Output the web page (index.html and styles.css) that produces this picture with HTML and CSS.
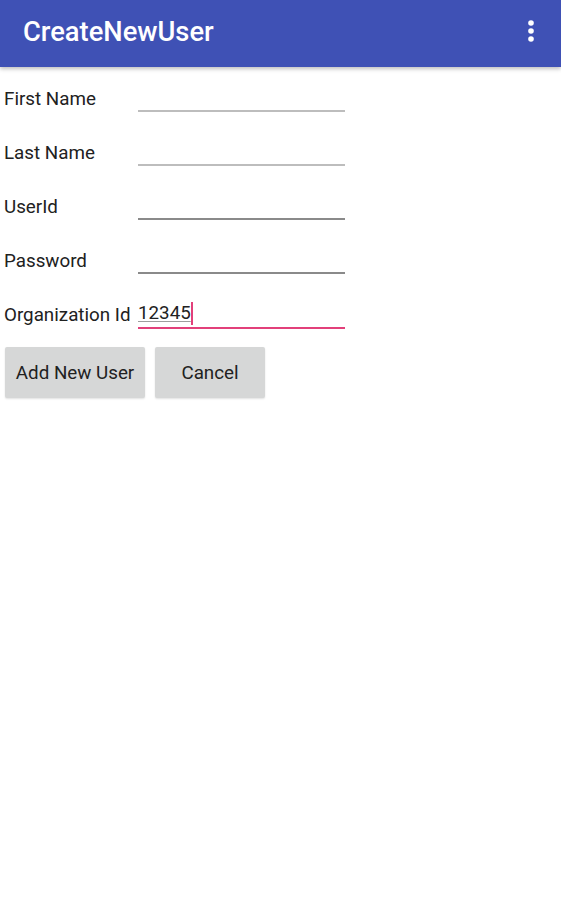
FILE: index.html
```html
<html lang="en">

<head>
    <meta charset="UTF-8">
    <meta name="viewport" content="width=device-width, initial-scale=1.0">
    <title>CreateNewUser</title>

    <link rel="stylesheet" href="styles.css">
</head>

<body>
    <div class="toolbar">
        <h1 class="toolbar-title">CreateNewUser</h1>
        <svg class="toolbar-menu" width="12" height="30" viewBox="0 0 12 30">
            <circle cx="6" cy="7" r="2.8" fill="white" />
            <circle cx="6" cy="15" r="2.8" fill="white" />
            <circle cx="6" cy="23" r="2.8" fill="white" />
        </svg>
    </div>

    <div class="form">
        <div class="form-row">
            <label class="form-label" for="firstName">First Name</label>
            <input class="form-input form-input-light" id="firstName" type="text" autocomplete="off" />
        </div>
        <div class="form-row">
            <label class="form-label" for="lastName">Last Name</label>
            <input class="form-input form-input-light" id="lastName" type="text" autocomplete="off" />
        </div>
        <div class="form-row">
            <label class="form-label" for="userId">UserId</label>
            <input class="form-input" id="userId" type="text" autocomplete="off" />
        </div>
        <div class="form-row">
            <label class="form-label" for="password">Password</label>
            <input class="form-input" id="password" type="password" autocomplete="off" />
        </div>
        <div class="form-row">
            <span class="form-label">Organization Id</span>
            <div class="form-input form-input-active">
                <span class="composing">12345</span><span class="caret"></span>
            </div>
        </div>

        <div class="buttons">
            <button class="form-button form-button-add" type="button">Add New User</button>
            <button class="form-button form-button-cancel" type="button">Cancel</button>
        </div>
    </div>
</body>

</html>
```

FILE: styles.css
```css
body {
    margin: 0;
    background-color: white;
    font-family: Roboto, "Noto Sans", sans-serif;
    color: #212121;
}

.toolbar {
    height: 67px;
    background-color: #3f51b5;
    display: flex;
    align-items: center;
    justify-content: space-between;
    padding: 0 24px 0 23px;
    box-shadow: 0 2px 4px rgba(0, 0, 0, 0.25);
    position: relative;
}

.toolbar-title {
    margin: 0;
    color: white;
    font-size: 27.3px;
    font-weight: 500;
    margin-top: -4px;
}

.toolbar-menu {
    margin-top: -6px;
}

.form {
    padding: 4px 0 0 4px;
}

.form-row {
    height: 54px;
    display: grid;
    grid-template-columns: 134px 207px;
    align-items: center;
}

.form-label {
    font-size: 18.8px;
    color: #212121;
    padding-top: 2px;
}

.form-input {
    box-sizing: border-box;
    height: 28px;
    margin-top: 0;
    padding: 0;
    border: none;
    border-bottom: 2px solid #8a8a8a;
    background: transparent;
    font-family: Roboto, sans-serif;
    font-size: 18.8px;
    outline: none;
}

.form-input-light {
    border-bottom-color: #bdbdbd;
}

.form-input-active {
    border-bottom-color: #e2407a;
    display: flex;
    align-items: flex-end;
    height: 32px;
    margin-top: -2px;
    padding-bottom: 4px;
}

.composing {
    color: #222;
    line-height: 20px;
    text-decoration: underline;
    text-decoration-color: #9e9e9e;
    text-underline-offset: 2px;
}

.caret {
    display: inline-block;
    width: 2px;
    height: 23px;
    background-color: #e2407a;
    margin-left: 0;
    margin-bottom: -2px;
}

.buttons {
    display: flex;
    gap: 10px;
    margin-top: 6px;
    padding-left: 1px;
}

.form-button {
    height: 51px;
    border: none;
    border-radius: 2px;
    background-color: #d6d7d7;
    color: #212121;
    font-family: Roboto, sans-serif;
    font-size: 18.8px;
    padding: 0;
    box-shadow: 0 1px 2px rgba(0, 0, 0, 0.12);
}

.form-button-add {
    width: 140px;
}

.form-button-cancel {
    width: 110px;
}
```
